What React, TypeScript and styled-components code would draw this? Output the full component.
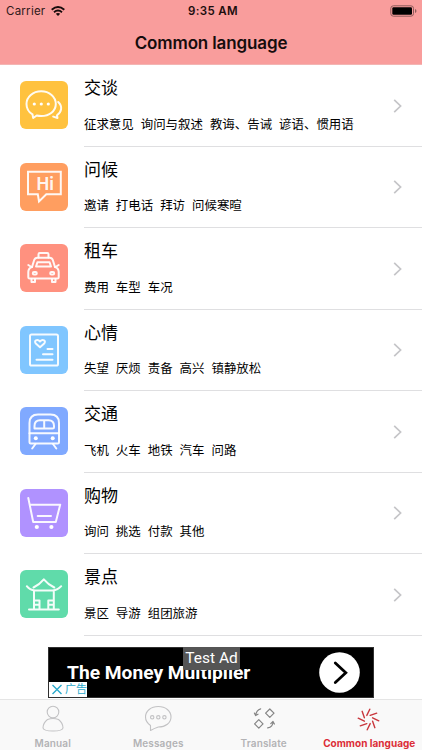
import React from "react";
import styled, { createGlobalStyle } from "styled-components";

const GlobalStyle = createGlobalStyle`
  *, *::before, *::after { box-sizing: border-box; }
  body { margin: 0; background: #fff; }
`;

const Screen = styled.div`
  width: 422px;
  height: 750px;
  display: flex;
  flex-direction: column;
  overflow: hidden;
  background: #fff;
  color: #000;
  font-family: Inter, "Noto Sans CJK SC", sans-serif;
`;

const Header = styled.header`
  height: 65.4px;
  flex: none;
  background: #f99d9c;
  border-bottom: 1px solid #f3b5b3;
`;

const StatusBar = styled.div`
  height: 22px;
  display: grid;
  grid-template-columns: 1fr auto 1fr;
  align-items: center;
  padding: 0 5px 0 6px;
  font-size: 11.5px;
  line-height: 22px;
`;

const Carrier = styled.div`
  display: flex;
  align-items: center;
  gap: 6px;
  letter-spacing: 0.25px;
  color: #30191a;
`;

const Time = styled.div`
  font-weight: 600;
  letter-spacing: 0.35px;
  padding-left: 3px;
  color: #1c0d0e;
`;

const Battery = styled.svg`
  justify-self: end;
`;

const Title = styled.h1`
  margin: 0;
  height: 43px;
  line-height: 43px;
  text-align: center;
  font-size: 17px;
  font-weight: 600;
  letter-spacing: -0.13px;
  color: #160c0c;
`;

const List = styled.ul`
  list-style: none;
  margin: 0;
  padding: 0;
  flex: none;
`;

const Row = styled.li`
  height: 81.5px;
  display: flex;
  padding-left: 20.4px;
`;

const Tile = styled.svg<{ $color: string }>`
  width: 48px;
  height: 48px;
  margin-top: 16px;
  flex: none;
  border-radius: 6px;
  background: ${(p) => p.$color};
  fill: none;
  stroke: #fff;
  stroke-opacity: 0.93;
  stroke-width: 2;
  stroke-linecap: round;
  stroke-linejoin: round;
`;

const Body = styled.div`
  flex: 1;
  display: flex;
  align-items: center;
  justify-content: space-between;
  margin-left: 15.6px;
  padding-right: 20px;
  border-bottom: 1px solid #dfdfe1;
`;

const Texts = styled.div`
  align-self: flex-start;
`;

const Name = styled.div`
  padding-top: 11px;
  font-size: 17px;
  line-height: 25px;
`;

const Detail = styled.div`
  margin-top: 13.5px;
  font-size: 12.45px;
  line-height: 20px;
  white-space: pre;
`;

const AdArea = styled.div`
  flex: 1;
  display: flex;
  justify-content: center;
  align-items: flex-end;
  padding-bottom: 1px;
`;

const Ad = styled.div`
  position: relative;
  width: 326px;
  height: 51px;
  display: flex;
  align-items: center;
  justify-content: space-between;
  padding: 0 13px 0 18px;
  background: #000;
  border: 1px solid #303030;
`;

const AdHeadline = styled.div`
  font: 700 19.2px Roboto, sans-serif;
  color: #fff;
  white-space: nowrap;
`;

const TestLabel = styled.div`
  position: absolute;
  top: -1px;
  left: 134px;
  width: 57px;
  height: 23px;
  border-radius: 0 0 2px 2px;
  background: #555;
  color: #fff;
  font: 400 15.5px/23px Roboto, sans-serif;
  text-align: center;
  white-space: nowrap;
`;

const AdMark = styled.div`
  position: absolute;
  left: 0;
  bottom: 0;
  width: 38px;
  height: 15px;
  display: flex;
  align-items: center;
  gap: 2px;
  padding-left: 2px;
  background: #fff;
  color: #2aa9cb;
  font-size: 11px;
  line-height: 15px;
  white-space: nowrap;
`;

const TabBar = styled.nav`
  height: 51px;
  flex: none;
  display: grid;
  grid-template-columns: repeat(4, 105.5px);
  background: #f9f9f9;
  border-top: 1px solid #e5e5e5;
`;

const Tab = styled.div<{ $active?: boolean }>`
  display: flex;
  flex-direction: column;
  align-items: center;
  color: ${(p) => (p.$active ? "#dc2d37" : "#b3b3b5")};
  font-size: 10px;
  font-weight: ${(p) => (p.$active ? 700 : 600)};
  letter-spacing: ${(p) => (p.$active ? "0.02px" : "0.15px")};
  white-space: nowrap;
  line-height: 14px;
`;

const TabIcon = styled.svg`
  width: 32px;
  height: 36px;
  flex: none;
  fill: none;
  stroke: #c2c2c4;
  stroke-width: 1.1;
  stroke-linejoin: round;
  stroke-linecap: round;
`;

const ChatIcon = () => (
  <>
    <path d="M12.5 33.4C8.5 31 6.5 27.3 6.5 23C6.5 15.8 13 10.3 21.2 10.3S35.8 15.8 35.8 23S29.3 35 21.2 35C19.6 35 18 34.8 16.7 34.5L13.2 37Z" />
    <path d="M38.2 21C43 25.5 41.5 31 37 34.3L37.5 37L33.2 35.6" />
    <g fill="#fff" stroke="none"><circle cx="14.3" cy="23" r="1.6" /><circle cx="21.3" cy="23" r="1.6" /><circle cx="28.3" cy="23" r="1.6" /></g>
  </>
);

const HiIcon = () => (
  <>
    <path d="M8 8.8H40.8V31.2H26.3L19 38.5L17.8 31.2H8Z" strokeLinejoin="miter" />
    <text x="25.3" y="27.2" textAnchor="middle" fill="#fff" fillOpacity=".93" stroke="none" fontFamily="Roboto" fontWeight="600" fontSize="18">Hi</text>
  </>
);

const TaxiIcon = () => (
  <>
    <path d="M18.5 13.5V10.2Q18.5 9 19.7 9H27.3Q28.5 9 28.5 10.2V13.5" />
    <path d="M12 23L14.2 16Q15 13.7 17.2 13.7H29.8Q32 13.7 32.8 16L35 23" />
    <path d="M16 22.5L17.5 18.2H29.5L31 22.5Z" />
    <path d="M8.3 21L11.5 23M38.7 21L35.5 23M12 23Q8.3 24.2 8.3 28V33.2Q8.3 34.5 9.6 34.5H37.4Q38.7 34.5 38.7 33.2V28Q38.7 24.2 35 23" />
    <path d="M11.5 35V38H15V35M32 35V38H35.5V35" />
    <rect x="12.8" y="28" width="4" height="2.4" rx="1.2" />
    <rect x="30.2" y="28" width="4" height="2.4" rx="1.2" />
  </>
);

const MoodIcon = () => (
  <>
    <rect x="10" y="8.5" width="28" height="31" rx="1.6" />
    <path d="M20 21.2L15.8 17.5C13.5 15 17.2 12.4 20 15.5C22.8 12.4 26.5 15 24.2 17.5Z" />
    <path d="M27.5 23H32.5M23 28.2H32.5M16.5 33.7H32.5" />
  </>
);

const TrainIcon = () => (
  <>
    <path d="M9.5 35.3V16Q9.5 7.5 18 7.5H30.5Q39 7.5 39 16V35.3Q39 36.5 37.8 36.5H10.7Q9.5 36.5 9.5 35.3Z" />
    <path d="M14.5 21.5V19Q14.5 13.3 20 13.3H28.5Q34 13.3 34 19V20Q34 21.5 32.5 21.5H16Q14.5 21.5 14.5 20M24.2 13.3V21.5M9.5 26.3H39M15.5 37L12.2 41.5M33 37L36.3 41.5" />
    <g fill="#fff" stroke="none"><circle cx="15.8" cy="31.2" r="2" /><circle cx="32.7" cy="31.2" r="2" /></g>
  </>
);

const CartIcon = () => (
  <>
    <path d="M8.3 9L13.2 33H35.8L40.2 15.7H10M17.7 27H31" />
    <g fill="#fff" stroke="none"><circle cx="16.8" cy="38" r="2.1" /><circle cx="31.4" cy="38" r="2.1" /></g>
  </>
);

const PavilionIcon = () => (
  <path d="M6.8 16.2Q9.5 20 15 20.5H32.5Q38 20 41.2 16.2M13.5 17.5Q19.5 14.5 23.8 9.3Q28.2 14.5 34.3 17.5M14 21V39M33.8 21V39M9 39.5H38.8M14.5 30.5H19.5V39M28.3 39V30.5H33.3M14.5 34.8H19.5M28.3 34.8H33.3" />
);

const categories = [
  { name: "交谈", detail: "征求意见  询问与叙述  教诲、告诫  谚语、惯用语", color: "#ffc23f", icon: <ChatIcon /> },
  { name: "问候", detail: "邀请  打电话  拜访  问候寒暄", color: "#ff9e60", icon: <HiIcon /> },
  { name: "租车", detail: "费用  车型  车况", color: "#ff917f", icon: <TaxiIcon /> },
  { name: "心情", detail: "失望  厌烦  责备  高兴  镇静放松", color: "#80c6ff", icon: <MoodIcon /> },
  { name: "交通", detail: "飞机  火车  地铁  汽车  问路", color: "#80a9ff", icon: <TrainIcon /> },
  { name: "购物", detail: "询问  挑选  付款  其他", color: "#b092ff", icon: <CartIcon /> },
  { name: "景点", detail: "景区  导游  组团旅游", color: "#60dbaa", icon: <PavilionIcon /> },
];

const spokes = [0, 45, 90, 135, 180, 225, 270, 315];

export default function App() {
  return (
    <Screen>
      <GlobalStyle />
      <Header>
        <StatusBar>
          <Carrier>
            Carrier
            <svg width="14" height="10" viewBox="0 0 14 10" fill="none" stroke="#170b0b" strokeWidth="1.9">
              <path d="M.7 3.7Q7-1.7 13.3 3.7M3 6.2Q7 2.8 11 6.2" />
              <path d="M4.8 7.8Q7 6 9.2 7.8L7 10Z" fill="#170b0b" stroke="none" />
            </svg>
          </Carrier>
          <Time>9:35 AM</Time>
          <Battery width="27" height="12" viewBox="0 0 27 12">
            <rect x=".8" y=".8" width="22.7" height="10.4" rx="2.6" fill="none" stroke="#8d5b5b" />
            <rect x="2.3" y="2.3" width="19.7" height="7.4" rx="1.2" fill="#000" />
            <path d="M25 4V8Q26.5 7.5 26.5 6T25 4" fill="#8d5b5b" />
          </Battery>
        </StatusBar>
        <Title>Common language</Title>
      </Header>
      <List>
        {categories.map((c) => (
          <Row key={c.name}>
            <Tile $color={c.color} viewBox="0 0 48 48">{c.icon}</Tile>
            <Body>
              <Texts>
                <Name>{c.name}</Name>
                <Detail>{c.detail}</Detail>
              </Texts>
              <svg width="9" height="14" viewBox="0 0 9 14" fill="none" stroke="#c5c5c8" strokeWidth="1.7">
                <path d="M1.2 .8L7.6 7L1.2 13.2" />
              </svg>
            </Body>
          </Row>
        ))}
      </List>
      <AdArea>
        <Ad>
          <AdHeadline>The Money Multiplier</AdHeadline>
          <svg width="41" height="41" viewBox="0 0 41 41">
            <circle cx="20.5" cy="20.5" r="20.3" fill="#fff" />
            <path d="M16.3 11L26.8 20.8L16.3 30.6" fill="none" stroke="#000" strokeWidth="2.8" strokeLinecap="round" />
          </svg>
          <TestLabel>Test Ad</TestLabel>
          <AdMark>
            <svg width="12" height="11" viewBox="0 0 12 11" stroke="#2aa9cb" strokeWidth="1.4"><path d="M1.5 1L10.5 10M10.5 1L1.5 10" /></svg>
            广告
          </AdMark>
        </Ad>
      </AdArea>
      <TabBar>
        <Tab>
          <TabIcon viewBox="0 0 32 36">
            <circle cx="16" cy="12" r="5.8" />
            <path d="M10.5 19.5Q16 17.5 21.5 19.5Q26 23 26 28Q25.5 31 16 31T6 28Q6 23 10.5 19.5Z" />
          </TabIcon>
          Manual
        </Tab>
        <Tab>
          <TabIcon viewBox="0 0 32 36">
            <path d="M8.5 25.5C5 23 3.5 20.5 3.5 17C3.5 11 9 6.5 16.3 6.5S29 11 29 17S23.5 27 16.3 27Q12 28.5 8.5 30.5Z" />
            <circle cx="10.2" cy="17.3" r="1.7" /><circle cx="16.3" cy="17.3" r="1.7" /><circle cx="22.4" cy="17.3" r="1.7" />
          </TabIcon>
          Messages
        </Tab>
        <Tab>
          <TabIcon viewBox="0 0 32 36">
            <g stroke="#858585" strokeWidth="1.2">
              <path d="M21.8 9L26 13.2L21.8 17.4L17.6 13.2ZM10.8 19.7L15 23.9L10.8 28.1L6.6 23.9Z" />
              <path d="M12.7 8.8Q8.3 10 7.7 15.2M6.4 13L7.6 15.6L10 14.2M19.7 27.9Q25 27 25 22M22.8 23.7L25 21.5L26.4 24" />
            </g>
          </TabIcon>
          Translate
        </Tab>
        <Tab $active>
          <TabIcon viewBox="0 0 32 36">
            <g stroke="#c9373d" strokeWidth="1.4">
              {spokes.map((a) => (
                <path key={a} d="M5.2 18.2L11.4 21.2" transform={`rotate(${a} 15.5 19.5)`} />
              ))}
            </g>
          </TabIcon>
          Common language
        </Tab>
      </TabBar>
    </Screen>
  );
}
